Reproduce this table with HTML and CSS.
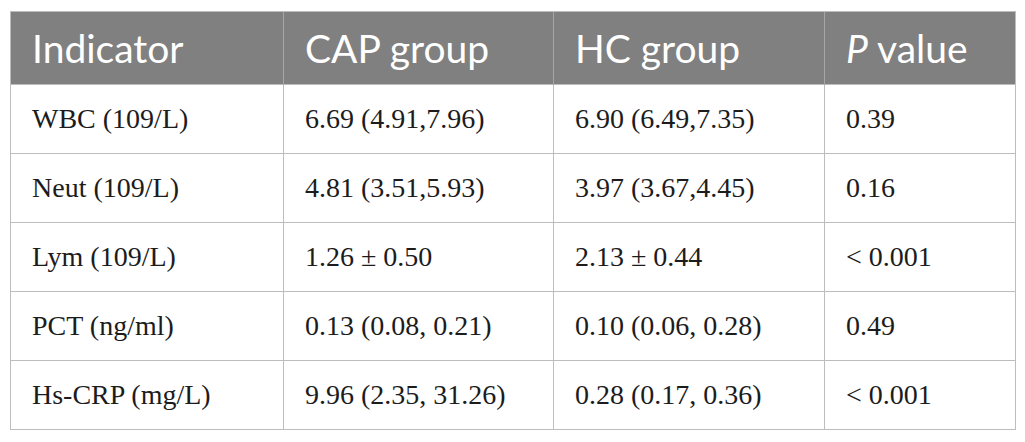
FILE: index.html
```html
<!DOCTYPE html>
<html>
<head>
<meta charset="utf-8">
<link rel="stylesheet" href="styles.css">
</head>
<body>
<div class="wrap">
<table class="data">
  <colgroup>
    <col class="c1"><col class="c2"><col class="c3"><col class="c4">
  </colgroup>
  <thead>
    <tr><th>Indicator</th><th>CAP group</th><th>HC group</th><th><i>P</i> value</th></tr>
  </thead>
  <tbody>
    <tr><td>WBC (109/L)</td><td>6.69 (4.91,7.96)</td><td>6.90 (6.49,7.35)</td><td>0.39</td></tr>
    <tr><td>Neut (109/L)</td><td>4.81 (3.51,5.93)</td><td>3.97 (3.67,4.45)</td><td>0.16</td></tr>
    <tr><td>Lym (109/L)</td><td>1.26 ± 0.50</td><td>2.13 ± 0.44</td><td>&lt; 0.001</td></tr>
    <tr><td>PCT (ng/ml)</td><td>0.13 (0.08, 0.21)</td><td>0.10 (0.06, 0.28)</td><td>0.49</td></tr>
    <tr><td>Hs-CRP (mg/L)</td><td>9.96 (2.35, 31.26)</td><td>0.28 (0.17, 0.36)</td><td>&lt; 0.001</td></tr>
  </tbody>
</table>
</div>
</body>
</html>
```
FILE: styles.css
```css
html, body { margin: 0; padding: 0; background: #fff; }
.wrap { padding: 11px 10px 0 10px; }
.data {
  border-collapse: collapse;
  table-layout: fixed;
  width: 1005px;
  border: 1px solid #bdbdbd;
}
.c1 { width: 273px; }
.c2 { width: 270px; }
.c3 { width: 271px; }
.c4 { width: 191px; }
.data th {
  background: #808080;
  color: #fff;
  font-family: Lato, "Open Sans", sans-serif;
  font-weight: 400;
  font-size: 39px;
  text-align: left;
  height: 73px;
  padding: 0 0 0 21px;
  border-left: 1px solid #a6a6a6;
  border-top: 1px solid #bdbdbd;
  box-sizing: border-box;
}
.data th:first-child { border-left: 1px solid #bdbdbd; }
.data td {
  font-family: "Liberation Serif", "Times New Roman", serif;
  font-size: 28px;
  color: #1c1c1c;
  height: 68px;
  padding: 0 0 0 21px;
  border: 1px solid #bdbdbd;
  white-space: nowrap;
}
```
